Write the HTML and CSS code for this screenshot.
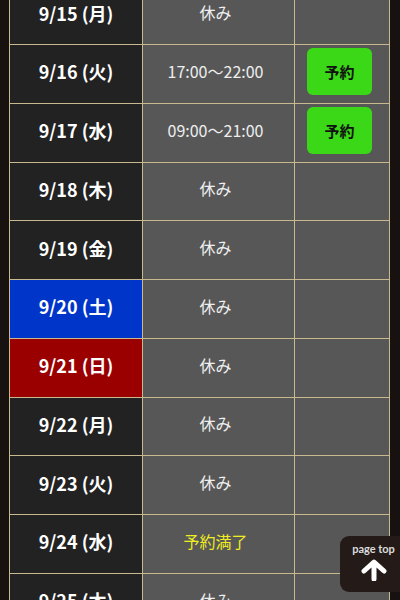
FILE: index.html
```html
<!DOCTYPE html>
<html lang="ja">
<head>
<meta charset="utf-8">
<title>スケジュール</title>
<link rel="stylesheet" href="styles.css">
</head>
<body>
<div class="schedule">
  <div class="date">9/15 (月)</div><div class="time">休み</div><div class="act"></div>
  <div class="date">9/16 (火)</div><div class="time">17:00〜22:00</div><div class="act"><a class="btn">予約</a></div>
  <div class="date">9/17 (水)</div><div class="time">09:00〜21:00</div><div class="act"><a class="btn">予約</a></div>
  <div class="date">9/18 (木)</div><div class="time">休み</div><div class="act"></div>
  <div class="date">9/19 (金)</div><div class="time">休み</div><div class="act"></div>
  <div class="date sat">9/20 (土)</div><div class="time">休み</div><div class="act"></div>
  <div class="date sun">9/21 (日)</div><div class="time">休み</div><div class="act"></div>
  <div class="date">9/22 (月)</div><div class="time">休み</div><div class="act"></div>
  <div class="date">9/23 (火)</div><div class="time">休み</div><div class="act"></div>
  <div class="date">9/24 (水)</div><div class="time full">予約満了</div><div class="act"></div>
  <div class="date">9/25 (木)</div><div class="time">休み</div><div class="act"></div>
</div>
<a class="pagetop">
  <span class="pt-label">page top</span>
  <svg class="pt-arrow" width="26" height="22" viewBox="0 0 26 22"><path d="M13 20V4M3 12L13 3L23 12" fill="none" stroke="#fff" stroke-width="5" stroke-linecap="round" stroke-linejoin="round"/></svg>
</a>
</body>
</html>
```
FILE: styles.css
```css
html, body {
  margin: 0;
  padding: 0;
  background: #17120f;
  font-family: "Noto Sans CJK JP", "Noto Sans", sans-serif;
  overflow: hidden;
}
.schedule {
  display: grid;
  grid-template-columns: 132px 151px 94px;
  grid-auto-rows: 57.75px;
  gap: 1px;
  padding: 1px;
  background: #c9b98e;
  width: max-content;
  margin: -14.75px 0 0 9px;
}
.schedule > div {
  display: flex;
  align-items: center;
  justify-content: center;
  box-sizing: border-box;
}
.date {
  background: #222222;
  color: #ffffff;
  font-weight: bold;
  font-size: 18px;
  padding-bottom: 5px;
}
.date.sat { background: #0035c9; }
.date.sun { background: #9a0000; }
.time {
  background: #575757;
  color: #eeeeee;
  font-size: 16px;
  padding-bottom: 6px;
  padding-right: 6px;
}
.time.full { color: #f0ee22; }
.act {
  background: #575757;
}
.btn {
  display: flex;
  align-items: center;
  justify-content: center;
  width: 65px;
  height: 47px;
  margin-right: 5px;
  margin-top: -4px;
  background: #3ad816;
  border-radius: 6px;
  color: #111;
  font-weight: bold;
  font-size: 15px;
}
.pagetop {
  position: fixed;
  left: 340px;
  right: 0;
  top: 536px;
  height: 56px;
  background: #241b19;
  border-radius: 9px 0 0 9px;
  display: flex;
  flex-direction: column;
  align-items: center;
  padding-left: 7px;
  box-sizing: border-box;
}
.pt-label {
  margin-top: 6px;
  color: #dcdcdc;
  font-family: "Lato", "Noto Sans", sans-serif;
  font-weight: bold;
  font-size: 11px;
  line-height: 13px;
}
.pt-arrow {
  margin-top: 4px;
}
```
